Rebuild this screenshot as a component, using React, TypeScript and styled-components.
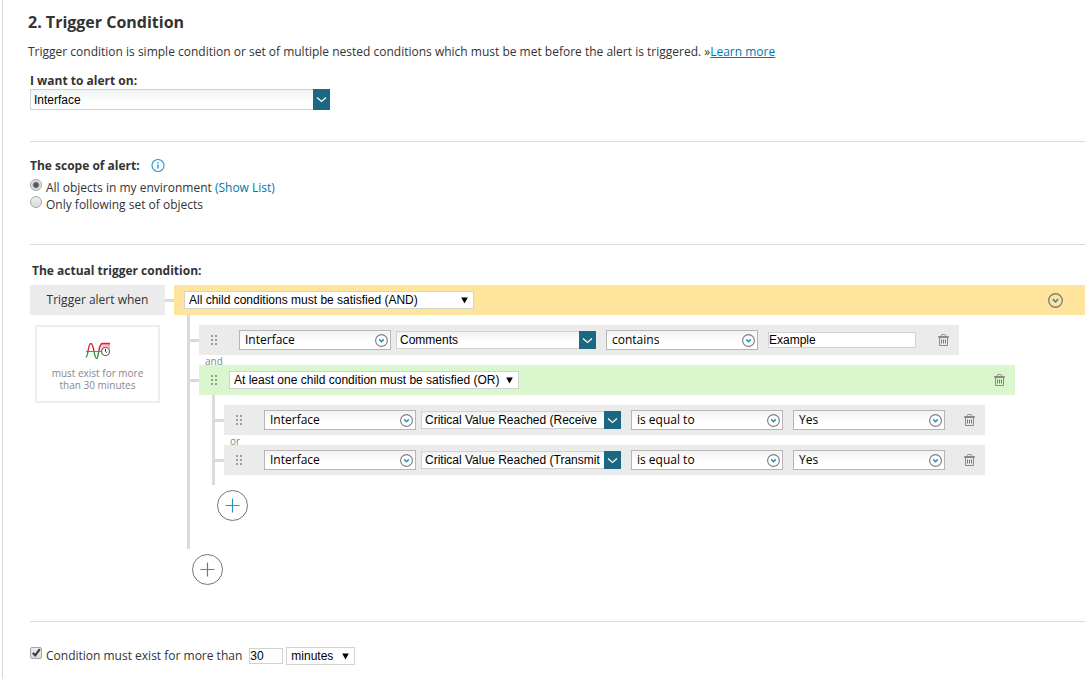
import React from "react";
import styled, { createGlobalStyle, css } from "styled-components";

const SANS = '"Open Sans", sans-serif';
const ARIAL = '"Liberation Sans", Arial, sans-serif';
const LINE = "#dadada";
const TEAL = "#1c6782";

const GlobalStyle = createGlobalStyle`
  *, *::before, *::after { box-sizing: border-box; }
  body {
    margin: 0;
    background: #fff;
    color: #333;
    font: 12px/16px ${SANS};
  }
  button, input, select { margin: 0; border-radius: 0; outline-offset: 1px; }
`;

const Page = styled.main`
  min-height: 100vh;
  margin-left: 2px;
  padding: 12px 3px 13px 27px;
  border-left: 1px solid ${LINE};
`;

const Intro = styled.header`
  margin-left: -2px;
`;

const Title = styled.h1`
  margin: 0 0 10px;
  font-size: 16px;
  line-height: 20px;
  font-weight: 700;
`;

const Lead = styled.p`
  margin: 0 0 11px;
  line-height: 20px;
`;

const Link = styled.a<{ $underline?: boolean }>`
  color: #0079aa;
  text-decoration: ${(p) => (p.$underline ? "underline" : "none")};
`;

const Section = styled.section<{ $top?: number; $bottom: number }>`
  padding-top: ${(p) => p.$top ?? 0}px;
  padding-bottom: ${(p) => p.$bottom}px;
  border-bottom: 1px solid ${LINE};
`;

const Caption = styled.label`
  display: block;
  font-weight: 700;
  line-height: 16px;
`;

const SectionTitle = styled.h2<{ $indent?: boolean }>`
  display: flex;
  align-items: center;
  gap: 11px;
  margin: 0;
  padding-left: ${(p) => (p.$indent ? 2 : 0)}px;
  font-size: 12px;
  line-height: 16px;
  font-weight: 700;
`;

const Choices = styled.div`
  margin-top: 5px;
`;

const Choice = styled.div`
  display: flex;
  align-items: flex-start;
  gap: 4px;
`;

const ChoiceText = styled.label`
  padding-top: 1px;
  line-height: 16px;
`;

const toggle = css`
  appearance: none;
  width: 12px;
  height: 12px;
  border: 1px solid #a6a6a6;
  background: linear-gradient(#ededed, #dcdcdc);
`;

const Radio = styled.input.attrs({ type: "radio" })`
  ${toggle}
  border-radius: 50%;
  &:checked {
    background: radial-gradient(circle, #555 0 2px, #e6e6e6 4px);
  }
`;

const TickWrap = styled.span`
  position: relative;
  width: 12px;
  height: 12px;
  svg {
    position: absolute;
    left: 1px;
    top: 0;
    pointer-events: none;
    visibility: hidden;
  }
  input:checked + svg { visibility: visible; }
`;

const Tick = styled.input.attrs({ type: "checkbox" })`
  ${toggle}
  display: block;
  border-radius: 2px;
`;

/* drop-downs */

const Picker = styled.span<{ $width: number }>`
  position: relative;
  display: flex;
  flex: none;
  width: ${(p) => p.$width}px;
`;

const Overlay = styled.span<{ $right: number }>`
  position: absolute;
  top: 0;
  bottom: 0;
  right: ${(p) => p.$right}px;
  display: flex;
  align-items: center;
  pointer-events: none;
`;

const PlainSelect = styled.select`
  appearance: none;
  width: 100%;
  height: 18px;
  padding: 0 18px 0 4px;
  border: 1px solid #d2d2d2;
  background: #fff;
  color: #000;
  font: 12px/16px ${ARIAL};
`;

const FieldSelect = styled.select`
  appearance: none;
  width: 100%;
  height: 20px;
  padding: 0 20px 0 5px;
  border: 1px solid #b6b6b6;
  background: linear-gradient(#f3f3f3, #fff 60%);
  color: #000;
  font: 12px/18px ${SANS};
`;

const ComboFrame = styled(Picker)<{ $tall?: boolean }>`
  height: ${(p) => (p.$tall ? 21 : 18)}px;
`;

const ComboSelect = styled.select`
  appearance: none;
  width: 100%;
  height: 100%;
  padding: 0 20px 0 3px;
  border: 1px solid #d2d2d2;
  background: linear-gradient(#f0f2f2, #fff 60%);
  color: #000;
  font: 12px/16px ${ARIAL};
`;

const ComboArrow = styled(Overlay)`
  width: 17px;
  justify-content: center;
  background: ${TEAL};
`;

const TextInput = styled.input.attrs({ type: "text" })<{ $width: number }>`
  width: ${(p) => p.$width}px;
  height: 16px;
  padding: 0;
  border: 1px solid #d2d2d2;
  background: #fff;
  color: #000;
  font: 12px/14px ${ARIAL};
`;

/* condition builder */

const Builder = styled.div`
  display: flex;
  align-items: flex-start;
  margin-top: 6px;
`;

const Side = styled.aside`
  flex: none;
  width: 135px;
  margin-right: 9px;
`;

const SideTitle = styled.div`
  height: 30px;
  background: #ebebeb;
  line-height: 30px;
  text-align: center;
`;

const SideCard = styled.div`
  display: flex;
  flex-direction: column;
  align-items: center;
  gap: 7px;
  margin: 10px 5px 0;
  padding: 15px 8px 10px;
  border: 2px solid #ededed;
  color: #888;
  font-size: 10px;
  line-height: 12px;
  text-align: center;
`;

const Group = styled.div<{ $nested?: boolean }>`
  flex: 1;
  min-width: 0;
  padding-bottom: ${(p) => (p.$nested ? 18 : 0)}px;
`;

const tones = { and: "#ffe59c", or: "#d9f6cc", row: "#ebebeb" };

const Bar = styled.div<{ $tone: keyof typeof tones; $width?: number }>`
  position: relative;
  display: flex;
  align-items: center;
  width: ${(p) => (p.$width ? `${p.$width}px` : "fit-content")};
  height: 30px;
  padding: 0 10px 0 11px;
  background: ${(p) => tones[p.$tone]};
  ${(p) => p.$tone === "and" && "width: auto; padding: 0 22px 0 10px;"}
  &::before {
    content: "";
    position: absolute;
    top: 14px;
    left: -9px;
    width: 9px;
    height: 3px;
    background: ${LINE};
  }
`;

const Children = styled.div`
  margin-left: 13px;
  padding: 10px 0 10px 9px;
  border-left: 3px solid ${LINE};
`;

const Joiner = styled.div`
  height: 10px;
  padding-left: 6px;
  color: #888;
  font-size: 10px;
  line-height: 12px;
`;

const Handle = styled.span<{ $after: number }>`
  display: flex;
  flex: none;
  margin-right: ${(p) => p.$after}px;
`;

const Fields = styled.div`
  display: flex;
  align-items: center;
  gap: 10px;
  margin-right: 19px;
`;

const Pair = styled.div`
  display: flex;
  align-items: center;
  gap: 5px;
`;

const ValueBox = styled.div`
  display: flex;
  width: 151px;
`;

const IconButton = styled.button`
  display: flex;
  flex: none;
  margin-left: auto;
  padding: 0;
  border: 0;
  background: none;
  cursor: pointer;
`;

const AddButton = styled.button`
  display: flex;
  align-items: center;
  justify-content: center;
  width: 31px;
  height: 31px;
  margin: 5px 0 0 18px;
  padding: 0;
  border: 1px solid #757575;
  border-radius: 50%;
  background: #fff;
  cursor: pointer;
`;

const Duration = styled.div`
  display: flex;
  align-items: flex-start;
  gap: 4px;
  padding-top: 25px;
`;

const DurationFields = styled.div`
  display: flex;
  align-items: center;
  gap: 3px;
  margin-left: 3px;
`;

/* icons */

const Chevron = () => (
  <svg width="11" height="7" viewBox="0 0 11 7" fill="none" stroke="#fff" strokeWidth="1.2" aria-hidden="true">
    <path d="M1 1.5 5.5 5.5 10 1.5" />
  </svg>
);

const Triangle = () => (
  <svg width="7" height="7" viewBox="0 0 7 7" aria-hidden="true">
    <path d="M.2.5h6.6L3.5 6.5z" fill="#000" />
  </svg>
);

const RoundArrow = ({ size }: { size: number }) => (
  <svg width={size} height={size} viewBox="0 0 13 13" fill="none" aria-hidden="true">
    <circle cx="6.5" cy="6.5" r="5.9" stroke="#808080" strokeWidth="1.2" fill={size > 13 ? "none" : "#fff"} />
    <path d="M4.2 5.4 6.5 7.6 8.8 5.4" stroke="#2795bb" strokeWidth="1.5" />
  </svg>
);

const Grip = () => (
  <svg width="8" height="10" viewBox="0 0 8 10" fill="#9b9b9b" aria-hidden="true">
    {[0, 4, 8].map((y) => (
      <g key={y}>
        <rect x="1" y={y} width="2" height="2" />
        <rect x="5" y={y} width="2" height="2" />
      </g>
    ))}
  </svg>
);

const Trash = () => (
  <svg width="11" height="12" viewBox="0 0 11 12" fill="none" aria-hidden="true">
    <path d="M3.5 2V1.3Q3.5.5 4.3.5h2.4q.8 0 .8.8V2M.5 2.5h10v1H.5zM1.5 3.5v8h8v-8" stroke="#8a8a8a" />
    <path d="M3.5 5.5v4M5.5 5.5v4M7.5 5.5v4" stroke="#2795bb" />
  </svg>
);

const Plus = () => (
  <svg width="15" height="15" viewBox="0 0 15 15" stroke="#2795bb" strokeWidth="1.2" aria-hidden="true">
    <path d="M.5 7.5h14M7.5.5v14" />
  </svg>
);

const Info = () => (
  <svg width="14" height="14" viewBox="0 0 14 14" fill="none" stroke="#3aa0cc" aria-hidden="true">
    <circle cx="7" cy="6.500" r="6" strokeWidth="1.2" />
    <path d="M7 5.500v4M7 3v1.400" strokeWidth="1.5" />
  </svg>
);

const CheckMark = () => (
  <svg width="11" height="11" viewBox="0 0 11 11" fill="none" aria-hidden="true">
    <path d="M1.8 6 4.2 8.3 8.8 2.2" stroke="#3c3c3c" strokeWidth="2.2" />
  </svg>
);

const Wave = () => (
  <svg width="26" height="18" viewBox="0 0 26 18" fill="none" aria-hidden="true">
    <defs>
      <linearGradient id="threshold" x1="1" y1="0" x2="0.3" y2="1">
        <stop offset="0" stopColor="#f26b75" stopOpacity=".7" />
        <stop offset="1" stopColor="#f26b75" stopOpacity="0.1" />
      </linearGradient>
    </defs>
    <path d="M13.5 9.5C14.500 4 15 1.500 17.500 1.500H25V7L19 9.500z" fill="url(#threshold)" />
    <path d="M.8 15.5C2.200 14.500 2.600 12 3 9.500M9 9.500C9.700 13 10.300 16.500 11.600 16.500S13 13 13.700 9.500" stroke="#2e9a3c" strokeWidth="1.4" />
    <path d="M3 9.500C3.700 5 4.300 1.500 5.800 1.500S8.300 5.500 9 9.500M13.700 9.500C14.500 4 15.500 1.500 17.500 1.500H25" stroke="#de2335" strokeWidth="1.4" />
    <path d="M1 9.500h16" stroke="#777" />
    <circle cx="20.500" cy="9.500" r="4" fill="#fff" stroke="#666" strokeWidth="1.2" />
    <path d="M20.500 7v2.500l1.500 1.200" stroke="#333" />
  </svg>
);

/* composed controls */

const Plain = ({ label, value, width }: { label: string; value: string; width: number }) => (
  <Picker $width={width}>
    <PlainSelect aria-label={label}>
      <option>{value}</option>
    </PlainSelect>
    <Overlay $right={6}>
      <Triangle />
    </Overlay>
  </Picker>
);

const Field = ({ label, value }: { label: string; value: string }) => (
  <Picker $width={152}>
    <FieldSelect aria-label={label}>
      <option>{value}</option>
    </FieldSelect>
    <Overlay $right={3}>
      <RoundArrow size={13} />
    </Overlay>
  </Picker>
);

const Combo = (p: { label?: string; id?: string; value: string; width: number; tall?: boolean }) => (
  <ComboFrame $width={p.width} $tall={p.tall}>
    <ComboSelect id={p.id} aria-label={p.label}>
      <option>{p.value}</option>
    </ComboSelect>
    <ComboArrow $right={0}>
      <Chevron />
    </ComboArrow>
  </ComboFrame>
);

const Remove = () => (
  <IconButton type="button" aria-label="Delete condition">
    <Trash />
  </IconButton>
);

type Condition = { field: string; operator: string; value: string; freeText?: boolean };

const ConditionRow = ({ field, operator, value, freeText }: Condition) => (
  <Bar $tone="row">
    <Handle $after={21}>
      <Grip />
    </Handle>
    <Fields>
      <Pair>
        <Field label="Object type" value="Interface" />
        <Combo label="Property" value={field} width={200} />
      </Pair>
      <Field label="Operator" value={operator} />
      {freeText ? (
        <ValueBox>
          <TextInput $width={148} aria-label="Value" defaultValue={value} />
        </ValueBox>
      ) : (
        <Field label="Value" value={value} />
      )}
    </Fields>
    <Remove />
  </Bar>
);

export default function App() {
  return (
    <>
      <GlobalStyle />
      <Page>
        <Intro>
          <Title>2. Trigger Condition</Title>
          <Lead>
            Trigger condition is simple condition or set of multiple nested conditions which must be met before the
            alert is triggered. »<Link $underline href="#learn">Learn more</Link>
          </Lead>
        </Intro>

        <Section $bottom={31}>
          <Caption htmlFor="alert-on">I want to alert on:</Caption>
          <Combo id="alert-on" value="Interface" width={300} tall />
        </Section>

        <Section $top={16} $bottom={31}>
          <SectionTitle>
            The scope of alert: <Info />
          </SectionTitle>
          <Choices role="radiogroup" aria-label="The scope of alert">
            <Choice>
              <Radio id="scope-all" name="scope" defaultChecked />
              <ChoiceText htmlFor="scope-all">
                All objects in my environment <Link href="#list">(Show List)</Link>
              </ChoiceText>
            </Choice>
            <Choice>
              <Radio id="scope-set" name="scope" />
              <ChoiceText htmlFor="scope-set">Only following set of objects</ChoiceText>
            </Choice>
          </Choices>
        </Section>

        <Section $top={18} $bottom={36}>
          <SectionTitle $indent>The actual trigger condition:</SectionTitle>
          <Builder>
            <Side>
              <SideTitle>Trigger alert when</SideTitle>
              <SideCard>
                <Wave />
                <span>must exist for more than 30 minutes</span>
              </SideCard>
            </Side>
            <Group>
              <Bar $tone="and">
                <Plain label="Match rule" value="All child conditions must be satisfied (AND)" width={290} />
                <IconButton type="button" aria-label="Collapse">
                  <RoundArrow size={15} />
                </IconButton>
              </Bar>
              <Children>
                <ConditionRow field="Comments" operator="contains" value="Example" freeText />
                <Joiner>and</Joiner>
                <Group $nested>
                  <Bar $tone="or" $width={816}>
                    <Handle $after={11}>
                      <Grip />
                    </Handle>
                    <Plain label="Match rule" value="At least one child condition must be satisfied (OR)" width={290} />
                    <Remove />
                  </Bar>
                  <Children>
                    <ConditionRow field="Critical Value Reached (Receive" operator="is equal to" value="Yes" />
                    <Joiner>or</Joiner>
                    <ConditionRow field="Critical Value Reached (Transmit" operator="is equal to" value="Yes" />
                  </Children>
                  <AddButton type="button" aria-label="Add nested condition">
                    <Plus />
                  </AddButton>
                </Group>
              </Children>
              <AddButton type="button" aria-label="Add condition">
                <Plus />
              </AddButton>
            </Group>
          </Builder>
        </Section>

        <Duration>
          <TickWrap>
            <Tick id="sustain" defaultChecked />
            <CheckMark />
          </TickWrap>
          <ChoiceText htmlFor="sustain">Condition must exist for more than</ChoiceText>
          <DurationFields>
            <TextInput $width={34} aria-label="Duration" defaultValue="30" />
            <Plain label="Duration unit" value="minutes" width={69} />
          </DurationFields>
        </Duration>
      </Page>
    </>
  );
}
